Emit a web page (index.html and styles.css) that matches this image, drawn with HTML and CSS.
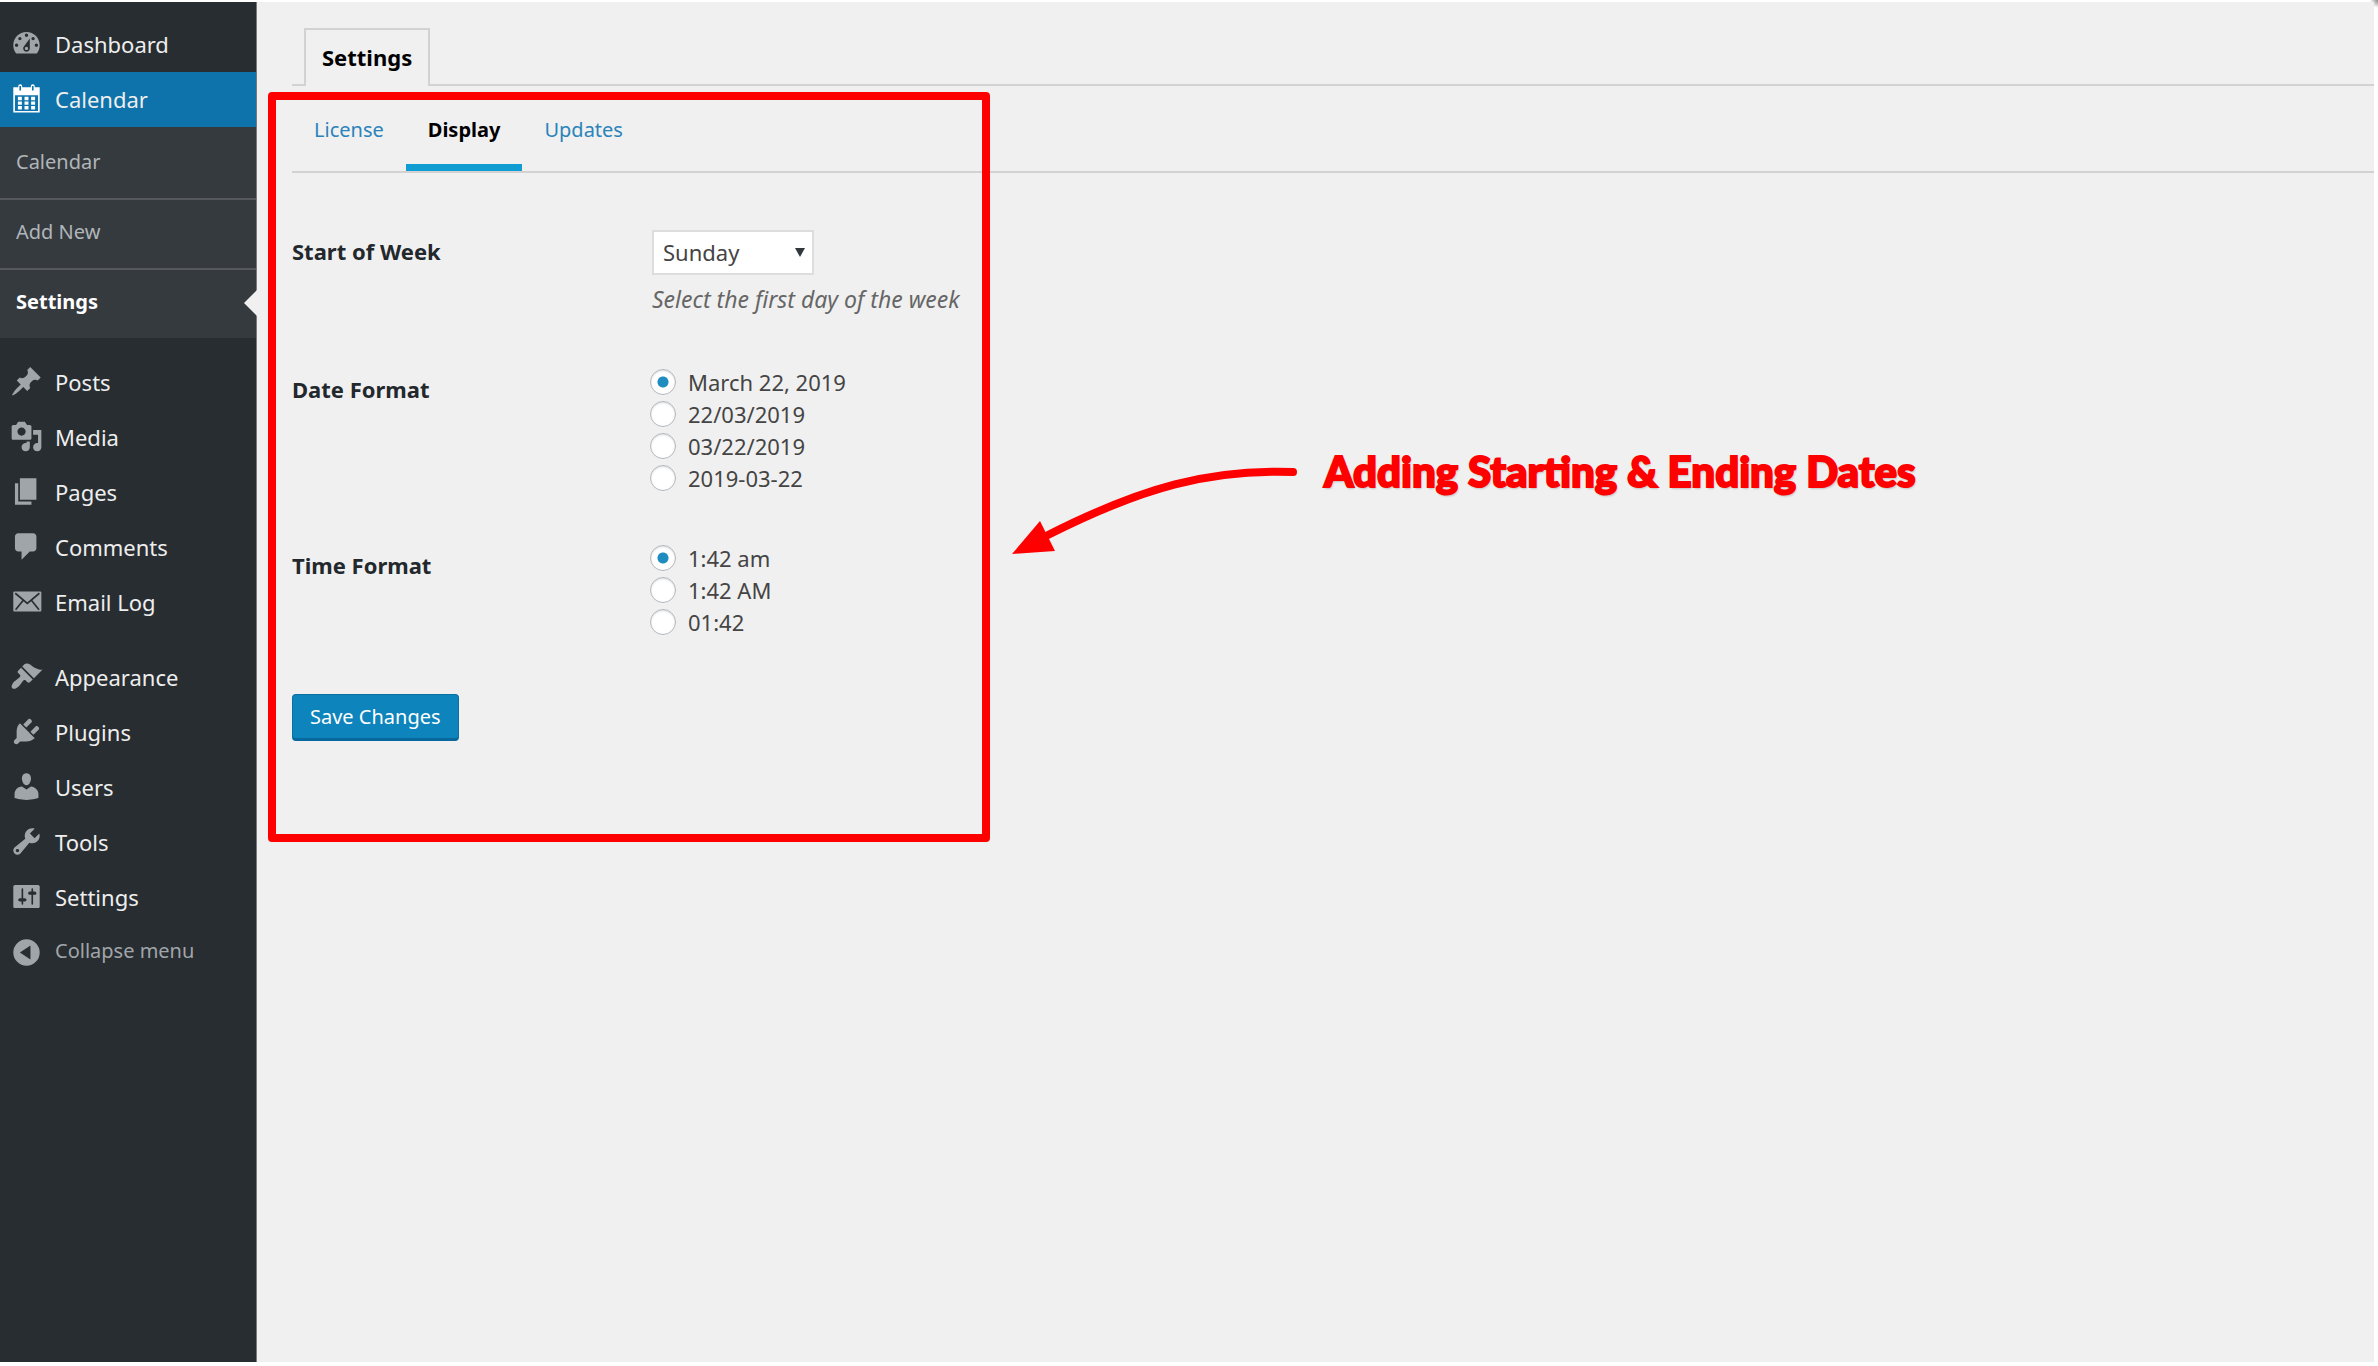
FILE: index.html
```html
<!DOCTYPE html>
<html lang="en">
<head>
    <meta charset="UTF-8">
    <meta name="viewport" content="width=device-width, initial-scale=1.0">
    <title>Calendar Settings</title>
    <link rel="stylesheet" href="styles.css">
</head>
<body>
    <nav class="sidebar">
        <ul class="menu">
            <li><a href="#">
                <svg class="icon" viewBox="0 0 20 20"><path fill-rule="evenodd" d="M3.76 16h12.48c1.1-1.37 1.76-3.11 1.76-5 0-4.42-3.58-8-8-8s-8 3.58-8 8c0 1.89.66 3.63 1.76 5zM10 4c.55 0 1 .45 1 1s-.45 1-1 1-1-.45-1-1 .45-1 1-1zM6 6c.55 0 1 .45 1 1s-.45 1-1 1-1-.45-1-1 .45-1 1-1zm8 0c.55 0 1 .45 1 1s-.45 1-1 1-1-.45-1-1 .45-1 1-1zm-5.37 5.55L12 7v6c0 1.1-.9 2-2 2s-2-.9-2-2c0-.57.24-1.08.63-1.45zM4 10c.55 0 1 .45 1 1s-.45 1-1 1-1-.45-1-1 .45-1 1-1zm12 0c.55 0 1 .45 1 1s-.45 1-1 1-1-.45-1-1 .45-1 1-1zm-5 3c0-.55-.45-1-1-1s-1 .45-1 1 .45 1 1 1 1-.45 1-1z"/></svg>
                Dashboard</a></li>
            <li class="current"><a href="#">
                <svg class="icon" viewBox="0 0 20 20"><path fill-rule="evenodd" d="M2 3.2h3V2.6a1.2 1.2 0 0 1 2.4 0v.6h5.2v-.6a1.2 1.2 0 0 1 2.4 0v.6h3V18.5H2zM3 8v9.5h14V8zM5.7 2.4v2.8h1V2.4zM13.3 2.4v2.8h1V2.4z"/><path d="M4.8 9h2.4v2H4.8zM8.8 9h2.4v2H8.8zM12.8 9h2.4v2h-2.4zM4.8 11.8h2.4v2H4.8zM8.8 11.8h2.4v2H8.8zM12.8 11.8h2.4v2h-2.4zM4.8 14.6h2.4v2H4.8zM8.8 14.6h2.4v2H8.8zM12.8 14.6h2.4v2h-2.4z"/></svg>
                Calendar</a></li>
        </ul>
        <ul class="submenu">
            <li><a href="#">Calendar</a></li>
            <li><a href="#">Add New</a></li>
            <li class="selected"><a href="#">Settings</a></li>
        </ul>
        <ul class="menu">
            <li><a href="#">
                <svg class="icon" viewBox="0 0 20 20"><path d="M10.44 3.02l1.82-1.82 6.36 6.35-1.83 1.82c-1.05-.68-2.48-.57-3.41.36l-.75.75c-.92.93-1.04 2.35-.35 3.41l-1.83 1.82-2.41-2.41-2.8 2.79c-.42.42-3.38 2.71-3.8 2.29s1.86-3.39 2.28-3.81l2.79-2.79L4.1 9.36l1.83-1.82c1.05.69 2.48.57 3.4-.36l.75-.75c.93-.92 1.05-2.35.36-3.41z"/></svg>
                Posts</a></li>
            <li><a href="#">
                <svg class="icon" viewBox="0 0 20 20"><path fill-rule="evenodd" d="M13 11V4c0-.55-.45-1-1-1h-1.67L9 1H5L3.67 3H2c-.55 0-1 .45-1 1v7c0 .55.45 1 1 1h10c.55 0 1-.45 1-1zM7 4.5c1.38 0 2.5 1.12 2.5 2.5S8.38 9.5 7 9.5 4.5 8.38 4.5 7 5.62 4.5 7 4.5zM14 6h5v10.5c0 1.38-1.12 2.5-2.5 2.5S14 17.88 14 16.5s1.12-2.5 2.5-2.5c.17 0 .34.02.5.05V9h-3V6zm-4 8.05V13h2v3.5c0 1.38-1.12 2.5-2.5 2.5S7 17.88 7 16.5 8.12 14 9.5 14c.17 0 .34.02.5.05z"/></svg>
                Media</a></li>
            <li><a href="#">
                <svg class="icon" viewBox="0 0 20 20"><path d="M6 15V2h10v13H6zm-1 1h8v2H3V5h2v11z"/></svg>
                Pages</a></li>
            <li><a href="#">
                <svg class="icon" viewBox="0 0 20 20"><path d="M5 2h9c1.1 0 2 .9 2 2v7c0 1.1-.9 2-2 2h-2l-5 5v-5H5c-1.1 0-2-.9-2-2V4c0-1.1.9-2 2-2z"/></svg>
                Comments</a></li>
            <li><a href="#">
                <svg class="icon" viewBox="0 0 20 20"><rect x="2" y="4" width="17" height="12" rx="0.6"/><path class="cut" d="M3.2 5l7.3 6.2L17.8 5M3.4 15l4.4-5.4M17.6 15l-4.4-5.4"/></svg>
                Email Log</a></li>
        </ul>
        <ul class="menu">
            <li><a href="#">
                <svg class="icon" viewBox="0 0 20 20"><path d="M14.48 11.06L7.41 3.99l1.5-1.5c.5-.56 2.3-.47 3.51.32 1.21.8 1.43 1.28 2.91 2.1 1.18.64 2.45 1.26 4.45.85zm-.71.71L6.7 4.7 4.93 6.47c-.39.39-.39 1.02 0 1.41l1.06 1.06c.39.39.39 1.03 0 1.42-.6.6-1.43 1.11-2.21 1.69-.35.26-.7.53-1.01.84C1.43 14.23.4 16.08 1.4 17.07c.99 1 2.84-.03 4.18-1.36.31-.31.58-.66.85-1.02.57-.78 1.08-1.61 1.69-2.21.39-.39 1.02-.39 1.41 0l1.06 1.06c.39.39 1.02.39 1.41 0z"/></svg>
                Appearance</a></li>
            <li><a href="#">
                <svg class="icon" viewBox="0 0 20 20"><path d="M13.11 4.36L9.87 7.6 8 5.73l3.24-3.24c.35-.34 1.05-.2 1.56.32.52.51.66 1.21.31 1.55zm-8 1.77l.91-1.12 9.01 9.01-1.19.84c-.71.71-2.63 1.16-3.82 1.16H6.14L4.9 17.26c-.59.59-1.54.59-2.12 0-.59-.58-.59-1.53 0-2.12l1.24-1.24v-3.88c0-1.13.4-3.19 1.09-3.89zm7.26 3.97l3.24-3.24c.34-.35 1.04-.21 1.55.31.52.51.66 1.21.31 1.55l-3.24 3.25z"/></svg>
                Plugins</a></li>
            <li><a href="#">
                <svg class="icon" viewBox="0 0 20 20"><path d="M10 9.25c-2.27 0-2.73-3.44-2.73-3.44C7 4.02 7.82 2 9.97 2c2.16 0 2.98 2.02 2.71 3.81 0 0-.41 3.44-2.68 3.44zm0 2.57L12.72 10c2.39 0 4.52 2.33 4.52 4.53v2.49s-3.65 1.13-7.24 1.13c-3.65 0-7.24-1.13-7.24-1.13v-2.49c0-2.25 1.94-4.48 4.47-4.48z"/></svg>
                Users</a></li>
            <li><a href="#">
                <svg class="icon" viewBox="0 0 20 20"><path fill-rule="evenodd" d="M16.68 9.77c-1.34 1.34-3.3 1.67-4.95.99l-5.41 6.52c-.99.99-2.59.99-3.58 0s-.99-2.59 0-3.57l6.52-5.42c-.68-1.65-.35-3.61.99-4.95 1.28-1.28 3.12-1.62 4.72-1.06l-2.89 2.89 2.82 2.82 2.86-2.87c.53 1.58.18 3.39-1.08 4.65zM3.81 16.21c.4.39 1.04.39 1.43 0 .4-.4.4-1.04 0-1.43-.39-.4-1.03-.4-1.43 0-.39.39-.39 1.03 0 1.43z"/></svg>
                Tools</a></li>
            <li><a href="#">
                <svg class="icon" viewBox="0 0 20 20"><path fill-rule="evenodd" d="M18 16V4c0-.55-.45-1-1-1H3c-.55 0-1 .45-1 1v12c0 .55.45 1 1 1h14c.55 0 1-.45 1-1zM8 11h1c.55 0 1 .45 1 1s-.45 1-1 1H8v1.5c0 .28-.22.5-.5.5s-.5-.22-.5-.5V13H6c-.55 0-1-.45-1-1s.45-1 1-1h1V5.5c0-.28.22-.5.5-.5s.5.22.5.5V11zm5-2h-1c-.55 0-1-.45-1-1s.45-1 1-1h1V5.5c0-.28.22-.5.5-.5s.5.22.5.5V7h1c.55 0 1 .45 1 1s-.45 1-1 1h-1v5.5c0 .28-.22.5-.5.5s-.5-.22-.5-.5V9z"/></svg>
                Settings</a></li>
        </ul>
        <button type="button" class="collapse">
            <svg class="icon" viewBox="0 0 20 20"><path fill-rule="evenodd" d="M10 3.2a8 8 0 1 0 0 16 8 8 0 0 0 0-16zM12.4 7v8.4L6 11.2z"/></svg>
            Collapse menu
        </button>
    </nav>

    <main class="content">
        <div class="tabs">
            <a href="#" class="tab">Settings</a>
        </div>
        <div class="subtabs">
            <a href="#">License</a>
            <a href="#" class="active">Display</a>
            <a href="#">Updates</a>
        </div>

        <form class="settings-form">
            <div class="row row-select">
                <label class="row-label" for="week-start">Start of Week</label>
                <div class="field">
                    <div class="select-wrap">
                        <select id="week-start">
                            <option>Sunday</option>
                            <option>Monday</option>
                        </select>
                    </div>
                    <p class="description">Select the first day of the week</p>
                </div>
            </div>
            <div class="row" role="radiogroup" aria-labelledby="date-format">
                <span class="row-label" id="date-format">Date Format</span>
                <div class="field">
                    <label class="option"><input type="radio" name="date" checked>March 22, 2019</label>
                    <label class="option"><input type="radio" name="date">22/03/2019</label>
                    <label class="option"><input type="radio" name="date">03/22/2019</label>
                    <label class="option"><input type="radio" name="date">2019-03-22</label>
                </div>
            </div>
            <div class="row" role="radiogroup" aria-labelledby="time-format">
                <span class="row-label" id="time-format">Time Format</span>
                <div class="field">
                    <label class="option"><input type="radio" name="time" checked>1:42 am</label>
                    <label class="option"><input type="radio" name="time">1:42 AM</label>
                    <label class="option"><input type="radio" name="time">01:42</label>
                </div>
            </div>
            <button type="submit" class="save">Save Changes</button>
        </form>

        <!-- callout over the settings panel -->
        <div class="highlight"></div>
        <div class="callout">
            <svg class="arrow" viewBox="0 0 290 92">
                <path class="line" d="M283 7C200 4 133 22 38 70"/>
                <path class="head" d="M2 89L30 56L45 86Z"/>
            </svg>
            <p class="note">Adding Starting &amp; Ending Dates</p>
        </div>
    </main>
</body>
</html>
```
FILE: styles.css
```css
* {
    box-sizing: border-box;
}
body {
    margin: 0;
    padding: 2px 4px 4px 0;
    min-height: 100vh;
    display: flex;
    background: radial-gradient(circle at 100% 0, #888, #fff 8px);
    font-family: "Noto Sans", "Open Sans", sans-serif;
    font-size: 22px;
    color: #444;
}
ul {
    list-style: none;
    margin: 0;
    padding: 0;
}
a {
    text-decoration: none;
}

/* Sidebar */
.sidebar {
    flex: 0 0 257px;
    padding-top: 15px;
    background-color: #282d31;
    border-right: 1px solid #777b7e;
}
.menu a, .collapse {
    display: flex;
    align-items: center;
    gap: 12px;
    height: 55px;
    padding: 0 0 2px 10px;
    color: #eee;
}
.icon {
    width: 33px;
    height: 33px;
    fill: #a0a5aa;
}
.icon .cut {
    fill: none;
    stroke: #282d31;
    stroke-width: 1;
}
.current {
    background-color: #0e73aa;
}
.current .icon {
    fill: #fff;
}
.submenu {
    padding-top: 3px;
    margin-bottom: 17px;
    background-color: #353a3f;
}
.submenu li {
    position: relative;
    border-bottom: 2px solid #55595d;
}
.submenu li:last-child {
    border-bottom: none;
}
.submenu a {
    display: flex;
    align-items: center;
    height: 68px;
    padding: 0 16px 6px;
    font-size: 20px;
    color: #b0b5b9;
}
.submenu .selected a {
    color: #fff;
    font-weight: bold;
}
.selected::after {
    content: "";
    position: absolute;
    right: -1px;
    top: 20px;
    border: 13px solid transparent;
    border-left: none;
    border-right-color: #f0f0f0;
}
.menu + .menu {
    margin-top: 20px;
}
.collapse {
    height: 52px;
    width: 100%;
    border: none;
    background: none;
    font-family: inherit;
    font-size: 20px;
    color: #a0a5aa;
}

/* Content */
.content {
    position: relative;
    flex: 1;
    padding: 26px 0 0 35px;
    background-color: #f0f0f0;
}
.tabs {
    display: flex;
    padding-left: 12px;
    border-bottom: 2px solid #d2d2d2;
}
.tab {
    height: 58px;
    margin-bottom: -2px;
    padding: 0 16px;
    line-height: 54px;
    border: 2px solid #d2d2d2;
    border-bottom: none;
    background-color: #f0f0f0;
    color: #000;
    font-weight: bold;
}
.subtabs {
    display: flex;
    height: 87px;
    border-bottom: 2px solid #d2d2d2;
}
.subtabs a {
    padding: 0 22px;
    line-height: 88px;
    font-size: 20px;
    color: #2a83ba;
}
.subtabs .active {
    border-bottom: 7px solid #109dd2;
    color: #000;
    font-weight: bold;
}
.settings-form {
    padding-top: 57px;
}
.row {
    display: flex;
    margin-bottom: 48px;
}
.row-select {
    margin-bottom: 51px;
}
.row-label {
    flex: 0 0 360px;
    padding-top: 9px;
    line-height: 28px;
    font-weight: bold;
    color: #23282d;
}
.row-select .row-label {
    padding-top: 7px;
}
.select-wrap {
    position: relative;
    width: 162px;
}
.select-wrap::after {
    content: "";
    position: absolute;
    right: 9px;
    top: 18px;
    border: 5px solid transparent;
    border-top: 9px solid #32373c;
    border-bottom: none;
    pointer-events: none;
}
select {
    display: block;
    width: 100%;
    height: 45px;
    padding: 0 9px 2px;
    appearance: none;
    border: 2px solid #ddd;
    border-radius: 0;
    background-color: #fff;
    font-family: inherit;
    font-size: 22px;
    color: #444;
}
.description {
    margin: 8px 0 0;
    line-height: 32px;
    font-size: 23px;
    font-style: italic;
    color: #666;
}
.option {
    display: flex;
    align-items: center;
    gap: 12px;
    height: 32px;
}
.option input {
    appearance: none;
    flex: none;
    width: 26px;
    height: 26px;
    margin: 0 0 0 -2px;
    border: 1px solid #b4b9be;
    border-radius: 50%;
    background-color: #fff;
    box-shadow: inset 0 1px 2px rgba(0, 0, 0, 0.15);
}
.option input:checked {
    background-image: radial-gradient(circle, #1e8cbe 5px, transparent 6px);
}
.save {
    height: 47px;
    margin-top: 8px;
    padding: 0 17px;
    border: 1px solid #0a6fa3;
    border-bottom: 3px solid #06689c;
    border-radius: 4px;
    background-color: #0d84bb;
    color: #fff;
    font-family: inherit;
    font-size: 20px;
}

/* Callout */
.highlight {
    position: absolute;
    left: 11px;
    top: 90px;
    width: 722px;
    height: 750px;
    border: 8px solid #f00;
    border-radius: 4px;
}
.callout {
    position: absolute;
    left: 753px;
    top: 463px;
    display: flex;
    gap: 24px;
}
.arrow {
    width: 290px;
    height: 92px;
}
.line {
    fill: none;
    stroke: #f00;
    stroke-width: 8;
    stroke-linecap: round;
}
.head {
    fill: #f00;
}
.note {
    margin: -22px 0 0;
    line-height: 56px;
    white-space: nowrap;
    font-family: "Lato", sans-serif;
    font-size: 42px;
    font-weight: 900;
    color: #f00;
    -webkit-text-stroke: 2px #f00;
    text-shadow: 1px 2px 2px rgba(0, 0, 0, 0.2);
}
```
